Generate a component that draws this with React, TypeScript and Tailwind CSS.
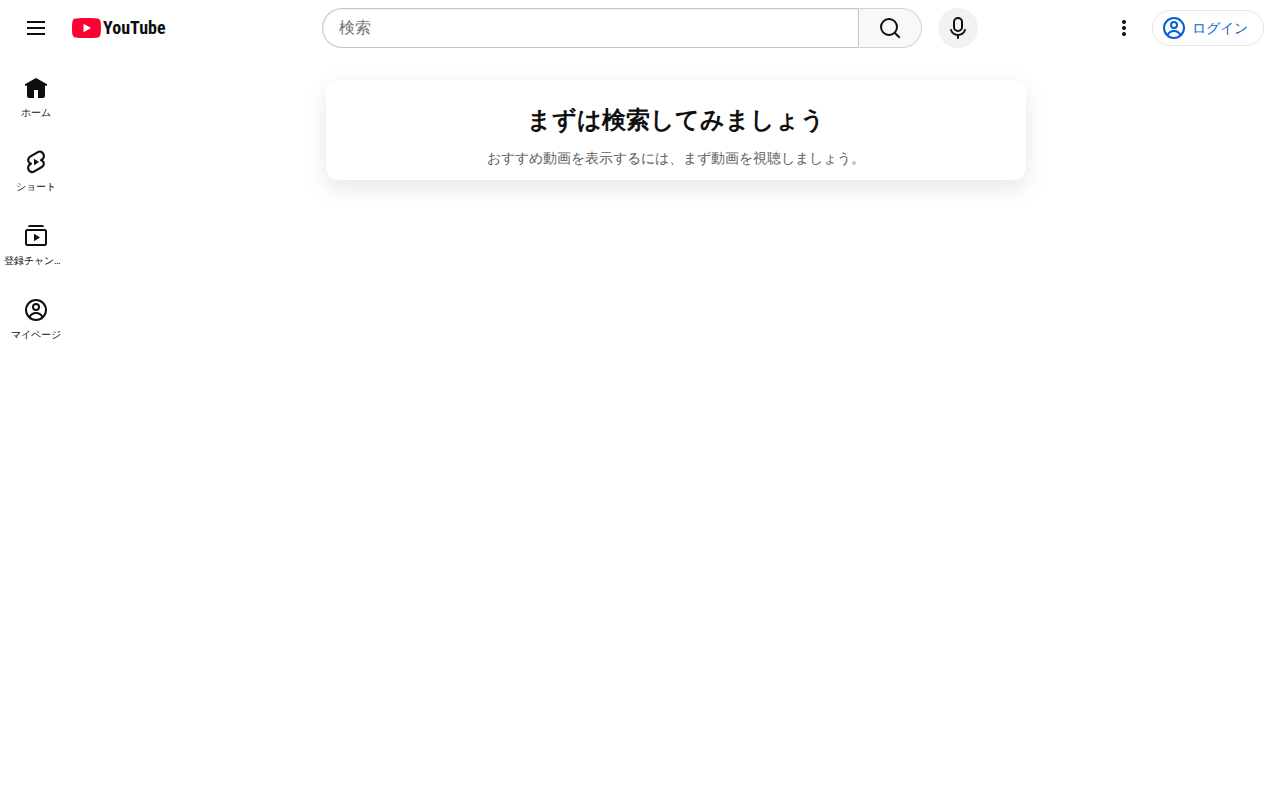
import type { ReactNode } from "react";

function MenuIcon() {
  return (
    <svg viewBox="0 0 24 24" className="size-6" fill="none" stroke="currentColor" strokeWidth="2" aria-hidden="true">
      <path d="M3 6h18M3 12h18M3 18h18" />
    </svg>
  );
}

function PlayBadge() {
  return (
    <svg viewBox="0 0 29 20" className="h-5 w-[29px] shrink-0" aria-hidden="true">
      <path
        fill="#ff0033"
        d="M14.5 0S5.4 0 3.2.6C1.9.9.9 1.9.6 3.1 0 5.4 0 10 0 10s0 4.600.6 6.900c.3 1.200 1.300 2.200 2.600 2.500C5.400 20 14.500 20 14.500 20s9.100 0 11.300-.6c1.300-.3 2.300-1.300 2.600-2.500.6-2.300.6-6.900.6-6.900s0-4.600-.6-6.900C28.100 1.900 27.100.9 25.800.6 23.600 0 14.500 0 14.500 0z"
      />
      <path fill="#fff" d="M11.500 14.300 19 10l-7.500-4.300z" />
    </svg>
  );
}

function SearchIcon() {
  return (
    <svg viewBox="0 0 24 24" className="size-6" fill="none" stroke="currentColor" strokeWidth="2" aria-hidden="true">
      <circle cx="11" cy="11" r="8" />
      <path d="m16.700 16.700 5 5" />
    </svg>
  );
}

function MicIcon() {
  return (
    <svg viewBox="0 0 24 24" className="size-6" fill="none" stroke="currentColor" strokeWidth="2" strokeLinecap="round" aria-hidden="true">
      <rect x="8" y="2" width="8" height="13" rx="4" />
      <path d="M5 14c1.200 3.100 3.900 5 7 5s5.800-1.900 7-5M12 19v3" />
    </svg>
  );
}

function DotsIcon() {
  return (
    <svg viewBox="0 0 24 24" className="size-6" fill="currentColor" aria-hidden="true">
      <circle cx="12" cy="6" r="2" />
      <circle cx="12" cy="12" r="2" />
      <circle cx="12" cy="18" r="2" />
    </svg>
  );
}

function PersonIcon() {
  return (
    <svg viewBox="0 0 24 24" className="size-6 shrink-0" fill="none" stroke="currentColor" strokeWidth="2" aria-hidden="true">
      <circle cx="12" cy="12" r="10" />
      <circle cx="12" cy="9" r="3" />
      <path d="M5.500 19.200C6.600 16.700 9 15 12 15s5.400 1.700 6.500 4.200" />
    </svg>
  );
}

function HomeIcon() {
  return (
    <svg viewBox="0 0 24 24" className="size-6" fill="currentColor" aria-hidden="true">
      <path d="M11.500 2.300 1.300 8.100a.9.900 0 0 0 .45 1.700H3V20a2 2 0 0 0 2 2h5v-8h4v8h5a2 2 0 0 0 2-2V9.800h1.250a.9.900 0 0 0 .45-1.700L12.500 2.300a1 1 0 0 0-1 0z" />
    </svg>
  );
}

function ShortsIcon() {
  return (
    <svg viewBox="0 0 24 24" className="size-6" fill="none" stroke="currentColor" strokeWidth="2.200" strokeLinejoin="round" aria-hidden="true">
      <path d="M14.300 1.900 6.100 6.600C3.600 8.100 3.500 11.800 5.900 13.200L6.900 13.800 5.800 14.500C4.200 15.600 3.700 18 4.700 19.900c1.100 2 3.400 2.700 5.200 1.700l8-4.600c2.500-1.500 2.600-4.900.2-6.300l-1-.6 1.100-.7c1.600-1.100 2.100-3.500 1.100-5.400-1.100-2-3.200-3.100-5-2.100z" />
      <path fill="currentColor" stroke="none" d="M10 15.200V8.800l5 3.200z" />
    </svg>
  );
}

function SubscriptionsIcon() {
  return (
    <svg viewBox="0 0 24 24" className="size-6" fill="none" stroke="currentColor" strokeWidth="2" aria-hidden="true">
      <rect x="2" y="6" width="20" height="15" rx="1.500" />
      <path fill="currentColor" stroke="none" d="M4 3a2 2 0 0 1 2-2h12a2 2 0 0 1 2 2z" />
      <path fill="currentColor" stroke="none" d="M10 17.200V9.800l6 3.700z" />
    </svg>
  );
}

const guide: { label: string; icon: ReactNode }[] = [
  { label: "ホーム", icon: <HomeIcon /> },
  { label: "ショート", icon: <ShortsIcon /> },
  { label: "登録チャンネル", icon: <SubscriptionsIcon /> },
  { label: "マイページ", icon: <PersonIcon /> },
];

function Header() {
  return (
    <header className="flex h-14 items-center justify-between px-4">
      <div className="flex w-[180px] shrink-0 items-center">
        <button type="button" aria-label="ガイド" className="flex size-10 shrink-0 items-center justify-center rounded-full">
          <MenuIcon />
        </button>
        <a href="#" className="flex items-center gap-0.5 pl-4">
          <PlayBadge />
          <span className="font-['Roboto_Condensed','Liberation_Sans_Narrow','Liberation_Sans',sans-serif] text-lg leading-5 font-bold">YouTube</span>
        </a>
      </div>

      <div className="flex min-w-0 flex-[0_1_656px] items-center gap-4">
        <form role="search" className="flex h-10 min-w-0 flex-1" onSubmit={(e) => e.preventDefault()}>
          <input
            type="text"
            aria-label="検索"
            placeholder="検索"
            className="min-w-0 flex-1 rounded-l-full border border-r-0 border-[#c6c6c6] px-4 text-base shadow-[inset_0_1px_2px_#eeeeee] outline-none placeholder:text-[#757575]"
          />
          <button type="submit" aria-label="検索を実行" className="flex w-16 shrink-0 items-center justify-center rounded-r-full border border-[#d3d3d3] border-l-[#c6c6c6] bg-[#f8f8f8]">
            <SearchIcon />
          </button>
        </form>
        <button type="button" aria-label="音声で検索" className="flex size-10 shrink-0 items-center justify-center rounded-full bg-[#f2f2f2]">
          <MicIcon />
        </button>
      </div>

      <div className="flex shrink-0 items-center gap-2">
        <button type="button" aria-label="設定" className="flex size-10 items-center justify-center rounded-full">
          <DotsIcon />
        </button>
        <a href="#" className="flex h-9 items-center gap-1.5 rounded-full border border-[#e5e5e5] pr-[15px] pl-[9px] text-sm font-medium whitespace-nowrap text-[#065fd4]">
          <PersonIcon />
          ログイン
        </a>
      </div>
    </header>
  );
}

export default function App() {
  return (
    <div lang="ja-JP" className="min-h-screen bg-white font-['Roboto','Liberation_Sans',sans-serif] text-[#0f0f0f]">
      <Header />
      <div className="flex">
        <nav className="w-[72px] shrink-0 px-1 pt-1">
          {guide.map((item) => (
            <a key={item.label} href="#" className="flex flex-col items-center gap-1.5 rounded-lg pt-4 pb-3.5">
              {item.icon}
              <span className="max-w-full truncate text-[10px] leading-[14px]">{item.label}</span>
            </a>
          ))}
        </nav>
        <main className="flex min-w-0 flex-1 justify-center px-6 pt-6">
          <section className="w-full max-w-[700px] self-start rounded-xl bg-white px-4 pt-6 pb-3 text-center shadow-[0_8px_24px_rgba(0,0,0,0.1)]">
            <h1 className="text-2xl leading-8 font-bold">まずは検索してみましょう</h1>
            <p className="mt-3 text-sm leading-5 text-[#606060]">おすすめ動画を表示するには、まず動画を視聴しましょう。</p>
          </section>
        </main>
      </div>
    </div>
  );
}
